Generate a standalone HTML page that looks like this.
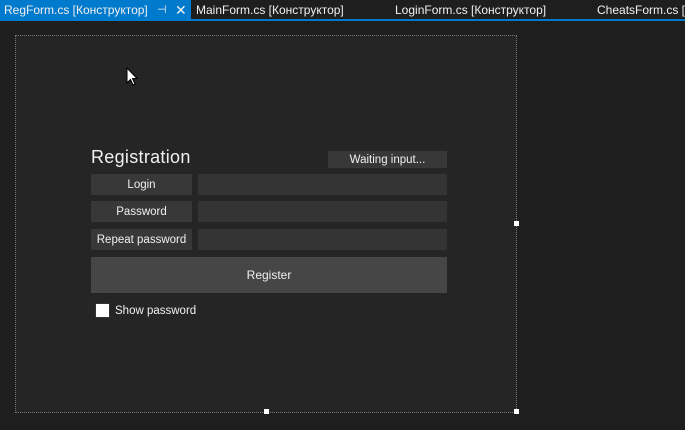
<!DOCTYPE html><html><head><style>
body{margin:0;width:685px;height:430px;background:#1e1e1e;position:relative;overflow:hidden;font-family:"Liberation Sans","Noto Sans CJK SC",sans-serif;font-size:12px;color:#f0f0f0}
.a{position:absolute}
.tab{position:absolute;top:0;height:19px;line-height:20px;font-size:12px;color:#f1f1f1;white-space:nowrap}
.b{position:absolute;background:#383838;text-align:center;color:#f0f0f0;font-size:11.5px}
.i{position:absolute;background:#343434}
.h{position:absolute;width:5px;height:5px;background:#fff;border:0}
</style></head><body>
<div class="a" style="left:0;top:0;width:685px;height:19px;background:#1e1e1e"></div>
<div class="a" style="left:0;top:0;width:191px;height:19px;background:#007acc"></div>
<div class="a" style="left:0;top:19px;width:685px;height:2px;background:#007acc"></div>
<div class="tab" style="left:4px">RegForm.cs [Конструктор]</div>
<div class="tab" style="left:157px;font-size:11px">⊣</div>
<div class="tab" style="left:175px;font-size:14px">✕</div>
<div class="tab" style="left:196px">MainForm.cs [Конструктор]</div>
<div class="tab" style="left:395px">LoginForm.cs [Конструктор]</div>
<div class="tab" style="left:597px">CheatsForm.cs [К</div>
<div class="a" style="left:15px;top:35px;width:500px;height:376px;background:#252525;border:1px dotted #777"></div>
<div class="h" style="left:514px;top:221px"></div>
<div class="h" style="left:264px;top:409px"></div>
<div class="h" style="left:514px;top:409px"></div>
<svg class="a" style="left:126px;top:67px" width="12" height="19" viewBox="0 0 12 19"><path d="M1 1V16L4.5 12.5L7 18L9 17L6.5 11.5H11Z" fill="#fff" stroke="#000" stroke-width="1"/></svg>
<div class="a" style="left:91px;top:147px;font-size:18px;color:#f0f0f0;letter-spacing:0.3px">Registration</div>
<div class="b" style="left:328px;top:151px;width:119px;height:17px;line-height:18px">Waiting input...</div>
<div class="b" style="left:91px;top:174px;width:101px;height:21px;line-height:23px">Login</div>
<div class="i" style="left:198px;top:174px;width:249px;height:21px"></div>
<div class="b" style="left:91px;top:201px;width:101px;height:21px;line-height:23px">Password</div>
<div class="i" style="left:198px;top:201px;width:249px;height:21px"></div>
<div class="b" style="left:91px;top:229px;width:101px;height:21px;line-height:23px">Repeat password</div>
<div class="i" style="left:198px;top:229px;width:249px;height:21px"></div>
<div class="b" style="left:91px;top:257px;width:356px;height:36px;line-height:36px;background:#464646;font-size:12px">Register</div>
<div class="a" style="left:95px;top:303px;width:13px;height:13px;background:#fff;border:1px solid #333"></div>
<div class="a" style="left:115px;top:305px;font-size:11.5px">Show password</div>
</body></html>
